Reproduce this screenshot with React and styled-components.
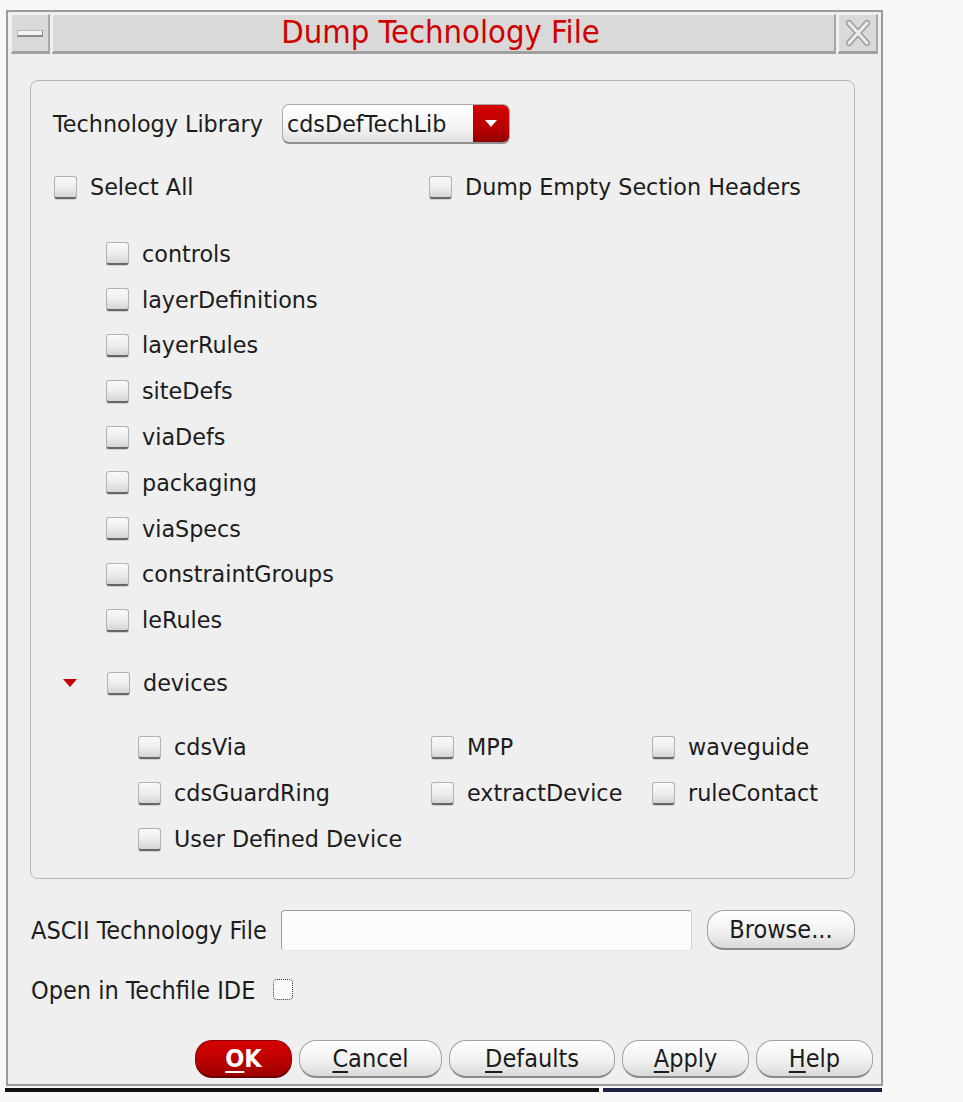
import React from "react";
import styled, { createGlobalStyle } from "styled-components";

const Global = createGlobalStyle`
  html, body { margin: 0; padding: 0; background: #f7f7f7; }
  body { font-family: "DejaVu Sans", sans-serif; color: #1c1c1c; }
  * { box-sizing: border-box; }
`;

const Page = styled.div`
  width: 963px;
  height: 1102px;
  padding: 10px 0 0 6px;
`;

const Window = styled.div`
  width: 877px;
  height: 1076px;
  border: 2px solid #9c9c9c;
  background: #efefef;
  display: flex;
  flex-direction: column;
  padding: 2px 3px 0 3px;
`;

const TitleBar = styled.div`
  height: 40px;
  flex: none;
  display: flex;
  gap: 2px;
`;

const TitleButton = styled.div`
  width: ${(p) => p.$w}px;
  height: 40px;
  background: #d9d9d9;
  border-top: 1px solid #f2f2f2;
  border-left: 1px solid #f2f2f2;
  border-bottom: 3px solid #a0a0a0;
  border-right: 2px solid #a8a8a8;
  display: flex;
  align-items: center;
  justify-content: center;
`;

const MinBar = styled.div`
  width: 26px;
  height: 7px;
  background: #f4f4f4;
  border: 1px solid #b8b8b8;
  border-right-color: #8c8c8c;
  border-bottom: 2px solid #8c8c8c;
  margin-top: 1px;
`;

const TitleMain = styled.div`
  flex: 1;
  height: 40px;
  background: #d9d9d9;
  border-top: 1px solid #f2f2f2;
  border-left: 1px solid #f6f6f6;
  border-bottom: 3px solid #a0a0a0;
  border-right: 2px solid #a8a8a8;
  display: flex;
  align-items: center;
  justify-content: center;
  font-family: "DejaVu Sans Condensed", "DejaVu Sans", sans-serif;
  font-stretch: condensed;
  font-size: 32.5px;
  color: #d10000;
  padding-bottom: 3px;
  padding-right: 6px;
`;

const Body = styled.div`
  flex: 1;
  display: flex;
  flex-direction: column;
  padding: 26px 23px 0 19px;
`;

const Frame = styled.div`
  height: 799px;
  flex: none;
  border: 1px solid #b6b6b6;
  border-radius: 8px;
  padding: 23px 0 0 22px;
  display: flex;
  flex-direction: column;
`;

const Label = styled.span`
  font-size: 22.3px;
  white-space: nowrap;
  color: #1c1c1c;
`;

const TechRow = styled.div`
  height: 40px;
  flex: none;
  display: flex;
  align-items: center;
  gap: 19px;
`;

const Combo = styled.div`
  width: 228px;
  height: 40px;
  border: 1px solid #a9a9a9;
  border-bottom: 2px solid #8f8f8f;
  border-radius: 7px;
  background: linear-gradient(#ffffff, #f4f4f4 60%, #dedede);
  display: flex;
  overflow: hidden;
`;

const ComboText = styled.div`
  flex: 1;
  display: flex;
  align-items: center;
  padding-left: 4px;
  font-size: 22.3px;
  color: #1c1c1c;
`;

const ComboArrow = styled.div`
  width: 36px;
  background: linear-gradient(#d80000, #b20000 70%, #8e0000);
  display: flex;
  align-items: center;
  justify-content: center;
`;

const Row = styled.div`
  height: ${(p) => p.$h ?? 46}px;
  flex: none;
  margin-top: ${(p) => p.$mt ?? 0}px;
  padding-left: ${(p) => p.$indent ?? 0}px;
  display: flex;
  align-items: center;
`;

const Cell = styled.div`
  width: ${(p) => (p.$w ? `${p.$w}px` : "auto")};
  display: flex;
  align-items: center;
  gap: 13px;
`;

const Box = styled.div`
  width: 23px;
  height: 23px;
  flex: none;
  border: 1px solid #b3b3b3;
  border-bottom: 2px solid #666666;
  border-radius: 3px;
  background: linear-gradient(#f9f9f9, #ececec 55%, #d4d4d4);
  box-shadow: 0 1px 0 #cfcfcf;
`;

const Expander = styled.div`
  width: 54px;
  display: flex;
  justify-content: flex-start;
  padding-left: 10px;
`;

const SubGrid = styled.div`
  display: grid;
  flex: none;
  grid-template-columns: 293px 221px auto;
  grid-auto-rows: 46px;
  align-items: center;
  padding-left: 85px;
  margin-top: 18px;
`;

const Narrow = styled.span`
  font-family: "DejaVu Sans Condensed", "DejaVu Sans", sans-serif;
  font-stretch: condensed;
  font-size: ${(p) => p.$size || 25}px;
  white-space: nowrap;
  color: ${(p) => p.$color || "#1c1c1c"};
  font-weight: ${(p) => p.$weight || 400};
`;

const FileRow = styled.div`
  height: 40px;
  flex: none;
  margin-top: 31px;
  display: flex;
  align-items: center;
  padding-left: 1px;
`;

const FileInput = styled.div`
  width: 411px;
  height: 41px;
  margin-left: 14px;
  border: 1px solid #9e9e9e;
  border-right-color: #d2d2d2;
  border-bottom-color: #e4e4e4;
  border-radius: 4px;
  background: #fcfcfc;
`;

const Pill = styled.div`
  width: ${(p) => p.$w}px;
  height: ${(p) => p.$h || 38}px;
  margin-left: ${(p) => p.$ml || 0}px;
  border-radius: 17px;
  border: 1px solid ${(p) => (p.$primary ? "#8a0000" : "#a2a2a2")};
  border-bottom: 2px solid ${(p) => (p.$primary ? "#6a0000" : "#8a8a8a")};
  background: ${(p) =>
    p.$primary
      ? "linear-gradient(#d70000, #b80000 60%, #9c0000)"
      : "linear-gradient(#ffffff, #f1f1f1 55%, #d9d9d9)"};
  display: flex;
  align-items: center;
  justify-content: center;
  flex: none;
`;

const IdeRow = styled.div`
  height: 40px;
  flex: none;
  margin-top: 20px;
  display: flex;
  align-items: center;
  gap: 18px;
  padding-left: 1px;
`;

const DotBox = styled.div`
  width: 20px;
  height: 21px;
  border: 1.5px dotted #333;
  border-radius: 4px;
  background: #fafafa;
  margin-top: -2px;
`;

const ButtonBar = styled.div`
  margin-bottom: 6px;
  flex: none;
  display: flex;
  justify-content: flex-end;
  gap: 7px;
  padding-right: 5px;
`;

const U = styled.span`
  text-decoration: underline;
  text-underline-offset: 4px;
  text-decoration-thickness: 2px;
`;

const Strip = styled.div`
  display: flex;
  height: 4px;
  margin-top: 2px;
  margin-left: -1px;
  width: 877px;
`;

const StripPart = styled.div`
  flex: ${(p) => p.$flex};
  background: ${(p) => p.$bg};
`;

const CloseIcon = () => (
  <svg width="28" height="28" viewBox="0 0 28 28">
    <path d="M5 4 L23 24 M23 4 L5 24" stroke="#9a9a9a" strokeWidth="6" strokeLinecap="round" fill="none" />
    <path d="M5 4 L23 24 M23 4 L5 24" stroke="#ececec" strokeWidth="3.2" strokeLinecap="round" fill="none" />
  </svg>
);

const Check = ({ label, w }) => (
  <Cell $w={w}>
    <Box />
    <Label>{label}</Label>
  </Cell>
);

const sections = [
  "controls",
  "layerDefinitions",
  "layerRules",
  "siteDefs",
  "viaDefs",
  "packaging",
  "viaSpecs",
  "constraintGroups",
  "leRules",
];

const devices = [
  "cdsVia",
  "MPP",
  "waveguide",
  "cdsGuardRing",
  "extractDevice",
  "ruleContact",
  "User Defined Device",
];

const Button = ({ w, ml, primary, first, rest }) => (
  <Pill $w={w} $ml={ml} $primary={primary}>
    <Narrow $color={primary ? "#ffffff" : "#1c1c1c"} $weight={primary ? 700 : 400}>
      <U>{first}</U>
      {rest}
    </Narrow>
  </Pill>
);

export default function App() {
  return (
    <Page>
      <Global />
      <Window>
        <TitleBar>
          <TitleButton $w={39}>
            <MinBar />
          </TitleButton>
          <TitleMain>Dump Technology File</TitleMain>
          <TitleButton $w={40}>
            <CloseIcon />
          </TitleButton>
        </TitleBar>
        <Body>
          <Frame>
            <TechRow>
              <Label>Technology Library</Label>
              <Combo>
                <ComboText>cdsDefTechLib</ComboText>
                <ComboArrow>
                  <svg width="12" height="8" viewBox="0 0 12 8">
                    <path d="M0 0 H12 L6 7 Z" fill="#ffffff" />
                  </svg>
                </ComboArrow>
              </Combo>
            </TechRow>
            <Row $h={40} $mt={23} $indent={1}>
              <Check label="Select All" w={375} />
              <Check label="Dump Empty Section Headers" />
            </Row>
            <Row $h={0} $mt={24} />
            {sections.map((s) => (
              <Row key={s} $indent={53} $h={45.8}>
                <Check label={s} />
              </Row>
            ))}
            <Row $mt={17}>
              <Expander>
                <svg width="14" height="8" viewBox="0 0 14 8">
                  <path d="M0 0 H14 L7 8 Z" fill="#c80000" />
                </svg>
              </Expander>
              <Check label="devices" />
            </Row>
            <SubGrid>
              {devices.map((d) => (
                <Check key={d} label={d} />
              ))}
            </SubGrid>
          </Frame>
          <FileRow>
            <Narrow>ASCII Technology File</Narrow>
            <FileInput />
            <Pill $w={148} $h={40} $ml={15}>
              <Narrow>Browse...</Narrow>
            </Pill>
          </FileRow>
          <IdeRow>
            <Narrow>Open in Techfile IDE</Narrow>
            <DotBox />
          </IdeRow>
        </Body>
        <ButtonBar>
          <Button w={97} primary first="O" rest="K" />
          <Button w={143} first="C" rest="ancel" />
          <Button w={166} first="D" rest="efaults" />
          <Button w={127} first="A" rest="pply" />
          <Button w={117} first="H" rest="elp" />
        </ButtonBar>
      </Window>
      <Strip>
        <StripPart $flex={596} $bg="#111111" />
        <StripPart $flex={4} $bg="#f7f7f7" />
        <StripPart $flex={280} $bg="#1b2142" />
      </Strip>
    </Page>
  );
}
